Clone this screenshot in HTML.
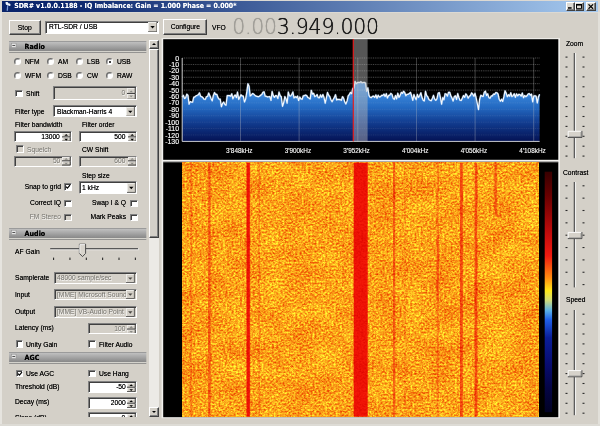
<!DOCTYPE html><html><head><meta charset="utf-8"><title>SDR#</title><style>
*{box-sizing:border-box;margin:0;padding:0}
html,body{width:600px;height:426px;overflow:hidden;background:#d4d0c8}
body{position:relative;opacity:.9999;font-family:"Liberation Sans",sans-serif;font-size:7.5px;color:#000;line-height:1;text-shadow:0 0 .6px rgba(0,0,0,.75)}
.a{position:absolute}
.t{position:absolute;white-space:nowrap;line-height:8px;height:8px;transform:scaleX(.895);transform-origin:0 50%}
.t.r{transform-origin:100% 50%}
.btn>span{display:inline-block;transform:scaleX(.9)}
.g{color:#74726c;text-shadow:.6px .6px 0 rgba(255,255,255,.85)}
.r{text-align:right}
.btn{position:absolute;background:#d4d0c8;border:1px solid;border-color:#fff #404040 #404040 #fff;box-shadow:inset -1px -1px 0 #808080;text-align:center}
.sunk{position:absolute;background:#fff;border:1px solid;border-color:#808080 #fff #fff #808080;box-shadow:inset 1px 1px 0 #404040}
.sunk.dis{background:#d4d0c8}
.cb{position:absolute;width:7.5px;height:7.5px;background:#fff;border:1px solid;border-color:#808080 #fff #fff #808080;box-shadow:inset 1px 1px 0 #404040}
.cb.dis{background:#d4d0c8}
.rb{position:absolute;width:7px;height:7px;border-radius:50%;background:#fff;border:1px solid;border-color:#6a6a6a #fff #fff #6a6a6a;box-shadow:inset .5px .5px 0 #707070}
.hdr{position:absolute;left:9.3px;width:137.4px;height:12.2px}
.hdr svg{position:absolute;left:0;top:0}
.hdr b{position:absolute;left:15.3px;top:1.2px;font-family:"DejaVu Sans Condensed","Liberation Sans",sans-serif;font-size:7.1px;line-height:9px}
.dd{position:absolute;background:#d4d0c8;border:1px solid;border-color:#fff #404040 #404040 #fff;box-shadow:inset -.5px -.5px 0 #808080}
.dd:after{content:"";position:absolute;left:50%;top:50%;margin:-1px 0 0 -2px;border:2px solid transparent;border-top:2.2px solid #000;border-bottom:0}
.dd.dis:after{border-top-color:#808080}
.sp{position:absolute}
</style></head><body>
<div class="a" style="left:0;top:0;width:600px;height:13px;background:#dcd9d3"></div>
<div class="a" style="left:2px;top:1px;width:596px;height:10.8px;background:linear-gradient(90deg,#0a246a 0%,#0c276e 12%,#a6caf0 100%)"></div>
<svg class="a" style="left:4px;top:1px" width="9" height="11" viewBox="0 0 9 11"><path d="M3.2 3.5L2.6 9.8L4 9.8L4.2 4.5Z" fill="#7e9cd8"/><path d="M1.5 1.2C3 .6 4.2 1 4.4 2.4C5.6 2.2 6.8 3 6.6 4.6C5.6 5.4 4.4 5 4 4C2.6 4.4 1.4 3.4 1.5 1.2Z" fill="#eef3fb"/></svg>
<div class="t" style="left:14.2px;top:2.1px;font-family:'DejaVu Sans Condensed','Liberation Sans',sans-serif;font-size:6.94px;font-weight:bold;color:#fff;line-height:9px;height:9px;transform:none;text-shadow:0 0 .6px rgba(255,255,255,.6)">SDR# v1.0.0.1188 - IQ Imbalance: Gain = 1.000 Phase = 0.000*</div>
<div class="btn" style="left:565.5px;top:1.8px;width:9px;height:8.8px;background:#dcd9d2">
<svg class="a" style="left:1.2px;top:4.4px" width="4" height="2" viewBox="0 0 4 2"><rect y=".2" width="3.6" height="1.5" fill="#000"/></svg>
</div>
<div class="btn" style="left:574.5px;top:1.8px;width:9px;height:8.8px;background:#dcd9d2">
<svg class="a" style="left:.8px;top:1.2px" width="6" height="5.6" viewBox="0 0 6 5.6"><path d="M.5 .8V4.7H5.5V.8Z" fill="none" stroke="#000" stroke-width="1"/><path d="M0 .7H6" stroke="#000" stroke-width="1.4"/></svg>
</div>
<div class="btn" style="left:586px;top:1.8px;width:10px;height:8.8px;background:#dcd9d2">
<svg class="a" style="left:1.4px;top:.9px" width="5.6" height="5.2" viewBox="0 0 5.6 5.2"><path d="M.5 .4L5.1 4.8M5.1 .4L.5 4.8" stroke="#000" stroke-width="1.25"/></svg>
</div>
<div class="a" style="left:0;top:12px;width:1.5px;height:414px;background:#e6e4df"></div>
<div class="a" style="left:598px;top:12px;width:2px;height:414px;background:#e2e0da"></div>
<div class="a" style="left:0;top:424px;width:600px;height:2px;background:#dddbd5"></div>
<div class="btn" style="left:9px;top:19.5px;width:31.5px;height:15px;line-height:13px"><span>Stop</span></div>
<div class="sunk" style="left:45px;top:20.5px;width:113.6px;height:13px"><span class="t" style="left:3px;top:1.5px">RTL-SDR / USB</span><svg class="sp" style="right:.8px;top:.8px" width="9.3" height="10.20" viewBox="0 0 9.3 10.20"><rect width="9.3" height="10.20" fill="#d4d0c8"/><path d="M.35 9.80V.35H8.9" stroke="#fff" stroke-width=".7" fill="none"/><path d="M0 9.80H8.9V0" stroke="#404040" stroke-width=".8" fill="none"/><path d="M2.35 4.00H6.75L4.55 6.40Z" fill="#000"/></svg></div>
<div class="btn" style="left:163.3px;top:19.3px;width:43.4px;height:15.6px;line-height:13.6px"><span>Configure</span></div>
<div class="t" style="left:211.7px;top:23.9px">VFO</div>
<div class="t" style="left:232.2px;top:15.1px;font-family:'DejaVu Sans Light','DejaVu Sans','Liberation Sans',sans-serif;font-weight:200;font-size:20.5px;letter-spacing:-.26px;line-height:24px;height:24px;color:#1c1c1c;transform:none;text-shadow:0 0 .5px rgba(0,0,0,.9),0 0 1px rgba(0,0,0,.35)"><span style="color:#a09e98;text-shadow:0 0 .5px #a09e98,0 0 1px rgba(150,148,142,.5)">0.00</span>3.949.000</div>
<div class="a" style="left:0;top:38px;width:149px;height:378.5px;overflow:hidden"><div class="a" style="left:0;top:-38px;width:149px;height:500px">
<div class="hdr" style="top:41.2px"><svg width="137.4" height="12.2" viewBox="0 0 137.4 12.2"><defs><linearGradient id="hg41" x1="0" y1="0" x2="0" y2="1"><stop offset="0" stop-color="#c6c6c6"/><stop offset=".5" stop-color="#a6a6a6"/><stop offset="1" stop-color="#868686"/></linearGradient></defs><rect width="137.4" height="10.3" fill="url(#hg41)"/><rect width="137.4" height=".7" fill="#8a8a8a"/><rect y="10.3" width="137.4" height="1" fill="#dedcd6"/><rect y="11.3" width="137.4" height=".9" fill="#7a7a7a"/><rect x="2.4" y="2.2" width="4.6" height="4.4" fill="#e6e6e6" stroke="#8c8c8c" stroke-width=".5"/><rect x="3.3" y="4" width="2.8" height=".9" fill="#444"/></svg><b>Radio</b></div>
<div class="rb" style="left:13.8px;top:58.2px"></div>
<div class="t " style="left:24.6px;top:57.7px">NFM</div>
<div class="rb" style="left:13.8px;top:72.3px"></div>
<div class="t " style="left:24.6px;top:71.8px">WFM</div>
<div class="rb" style="left:47.0px;top:58.2px"></div>
<div class="t " style="left:57.8px;top:57.7px">AM</div>
<div class="rb" style="left:47.0px;top:72.3px"></div>
<div class="t " style="left:57.8px;top:71.8px">DSB</div>
<div class="rb" style="left:76.0px;top:58.2px"></div>
<div class="t " style="left:86.8px;top:57.7px">LSB</div>
<div class="rb" style="left:76.0px;top:72.3px"></div>
<div class="t " style="left:86.8px;top:71.8px">CW</div>
<div class="rb" style="left:106.0px;top:58.2px"><div class="a" style="left:1.5px;top:1.5px;width:2.4px;height:2.4px;border-radius:50%;background:#000"></div></div>
<div class="t " style="left:116.8px;top:57.7px">USB</div>
<div class="rb" style="left:106.0px;top:72.3px"></div>
<div class="t " style="left:116.8px;top:71.8px">RAW</div>
<div class="cb" style="left:15px;top:89.8px"></div>
<div class="t " style="left:26px;top:89.7px">Shift</div>
<div class="sunk dis" style="left:53.3px;top:86px;width:83.4px;height:14px"><span class="t r g" style="right:10.4px;top:2.3px">0</span><svg class="sp" style="right:.2px;top:.6px" width="8.6" height="11.60" viewBox="0 0 8.6 11.60"><rect width="8.6" height="11.60" fill="#d4d0c8"/><path d="M.3 5.40V.3H8.3M.3 11.20V6.10H8.3" stroke="#fff" stroke-width=".7" fill="none"/><path d="M0 5.45H8.25V0M0 11.25H8.25V5.80" stroke="#303030" stroke-width=".95" fill="none"/><path d="M2.4 4.30L4.2 2.50L6 4.30Z M2.4 7.40L4.2 9.20L6 7.40Z" fill="#8a8a86"/></svg></div>
<div class="t " style="left:14.7px;top:107.6px">Filter type</div>
<div class="sunk" style="left:53.3px;top:105px;width:83.4px;height:12.2px"><span class="t" style="left:2.5px;top:1.4999999999999996px">Blackman-Harris 4</span><svg class="sp" style="right:.8px;top:.8px" width="8.8" height="9.60" viewBox="0 0 8.8 9.60"><rect width="8.8" height="9.60" fill="#d4d0c8"/><path d="M.35 9.20V.35H8.4" stroke="#fff" stroke-width=".7" fill="none"/><path d="M0 9.20H8.4V0" stroke="#404040" stroke-width=".8" fill="none"/><path d="M2.10 3.70H6.50L4.30 6.10Z" fill="#000"/></svg></div>
<div class="t " style="left:14.7px;top:121px">Filter bandwidth</div>
<div class="t " style="left:81.6px;top:121px">Filter order</div>
<div class="sunk" style="left:13.5px;top:131.2px;width:58.2px;height:10.9px"><span class="t r" style="right:10.4px;top:0.75px">13000</span><svg class="sp" style="right:.2px;top:.6px" width="8.6" height="8.50" viewBox="0 0 8.6 8.50"><rect width="8.6" height="8.50" fill="#d4d0c8"/><path d="M.3 3.85V.3H8.3M.3 8.10V4.55H8.3" stroke="#fff" stroke-width=".7" fill="none"/><path d="M0 3.90H8.25V0M0 8.15H8.25V4.25" stroke="#303030" stroke-width=".95" fill="none"/><path d="M2.4 2.75L4.2 0.95L6 2.75Z M2.4 5.85L4.2 7.65L6 5.85Z" fill="#000"/></svg></div>
<div class="sunk" style="left:79.2px;top:131.2px;width:58.2px;height:10.9px"><span class="t r" style="right:10.4px;top:0.75px">500</span><svg class="sp" style="right:.2px;top:.6px" width="8.6" height="8.50" viewBox="0 0 8.6 8.50"><rect width="8.6" height="8.50" fill="#d4d0c8"/><path d="M.3 3.85V.3H8.3M.3 8.10V4.55H8.3" stroke="#fff" stroke-width=".7" fill="none"/><path d="M0 3.90H8.25V0M0 8.15H8.25V4.25" stroke="#303030" stroke-width=".95" fill="none"/><path d="M2.4 2.75L4.2 0.95L6 2.75Z M2.4 5.85L4.2 7.65L6 5.85Z" fill="#000"/></svg></div>
<div class="cb dis" style="left:16.3px;top:145.10000000000002px"></div>
<div class="t g" style="left:27px;top:145.5px">Squelch</div>
<div class="t " style="left:81.6px;top:146.2px">CW Shift</div>
<div class="sunk dis" style="left:13.5px;top:155.8px;width:58.2px;height:10.8px"><span class="t r g" style="right:10.4px;top:0.7000000000000002px">50</span><svg class="sp" style="right:.2px;top:.6px" width="8.6" height="8.40" viewBox="0 0 8.6 8.40"><rect width="8.6" height="8.40" fill="#d4d0c8"/><path d="M.3 3.80V.3H8.3M.3 8.00V4.50H8.3" stroke="#fff" stroke-width=".7" fill="none"/><path d="M0 3.85H8.25V0M0 8.05H8.25V4.20" stroke="#303030" stroke-width=".95" fill="none"/><path d="M2.4 2.70L4.2 0.90L6 2.70Z M2.4 5.80L4.2 7.60L6 5.80Z" fill="#8a8a86"/></svg></div>
<div class="sunk dis" style="left:79.2px;top:155.8px;width:58.2px;height:10.8px"><span class="t r g" style="right:10.4px;top:0.7000000000000002px">600</span><svg class="sp" style="right:.2px;top:.6px" width="8.6" height="8.40" viewBox="0 0 8.6 8.40"><rect width="8.6" height="8.40" fill="#d4d0c8"/><path d="M.3 3.80V.3H8.3M.3 8.00V4.50H8.3" stroke="#fff" stroke-width=".7" fill="none"/><path d="M0 3.85H8.25V0M0 8.05H8.25V4.20" stroke="#303030" stroke-width=".95" fill="none"/><path d="M2.4 2.70L4.2 0.90L6 2.70Z M2.4 5.80L4.2 7.60L6 5.80Z" fill="#8a8a86"/></svg></div>
<div class="t " style="left:81.6px;top:172px">Step size</div>
<div class="t r " style="left:-19.5px;width:80px;top:183.3px">Snap to grid</div>
<div class="cb" style="left:64.3px;top:183.3px"><svg class="a" style="left:0;top:0" width="6" height="6" viewBox="0 0 6 6"><path d="M1 2.6L2.4 4.2L5 1.2" stroke="#000" stroke-width="1.2" fill="none"/></svg></div>
<div class="sunk" style="left:78.8px;top:181.2px;width:58.6px;height:12.4px"><span class="t" style="left:2.5px;top:1.6px">1 kHz</span><svg class="sp" style="right:.8px;top:.8px" width="8.8" height="9.80" viewBox="0 0 8.8 9.80"><rect width="8.8" height="9.80" fill="#d4d0c8"/><path d="M.35 9.40V.35H8.4" stroke="#fff" stroke-width=".7" fill="none"/><path d="M0 9.40H8.4V0" stroke="#404040" stroke-width=".8" fill="none"/><path d="M2.10 3.80H6.50L4.30 6.20Z" fill="#000"/></svg></div>
<div class="t r " style="left:-19.5px;width:80px;top:199.4px">Correct IQ</div>
<div class="cb" style="left:64.3px;top:199.5px"></div>
<div class="t r " style="left:46px;width:80px;top:199.4px">Swap I &amp; Q</div>
<div class="cb" style="left:130px;top:199.5px"></div>
<div class="t r g" style="left:-19.5px;width:80px;top:213.4px">FM Stereo</div>
<div class="cb dis" style="left:64.3px;top:213.5px"></div>
<div class="t r " style="left:46px;width:80px;top:213.4px">Mark Peaks</div>
<div class="cb" style="left:130px;top:213.5px"></div>
<div class="hdr" style="top:228px"><svg width="137.4" height="12.2" viewBox="0 0 137.4 12.2"><defs><linearGradient id="hg228" x1="0" y1="0" x2="0" y2="1"><stop offset="0" stop-color="#c6c6c6"/><stop offset=".5" stop-color="#a6a6a6"/><stop offset="1" stop-color="#868686"/></linearGradient></defs><rect width="137.4" height="10.3" fill="url(#hg228)"/><rect width="137.4" height=".7" fill="#8a8a8a"/><rect y="10.3" width="137.4" height="1" fill="#dedcd6"/><rect y="11.3" width="137.4" height=".9" fill="#7a7a7a"/><rect x="2.4" y="2.2" width="4.6" height="4.4" fill="#e6e6e6" stroke="#8c8c8c" stroke-width=".5"/><rect x="3.3" y="4" width="2.8" height=".9" fill="#444"/></svg><b>Audio</b></div>
<div class="t " style="left:14.7px;top:248px">AF Gain</div>
<svg class="a" style="left:48px;top:242px" width="94" height="22" viewBox="48 242 94 22">
<path d="M50.2 248.7H138.3" stroke="#585858" stroke-width="1.4"/><path d="M50.2 249.8H138.6V248" stroke="#f4f4f4" stroke-width=".7" fill="none"/>
<path d="M79.4 244.2H85.6V253.4L82.5 256.6L79.4 253.4Z" fill="#d8d4cc" stroke="#404040" stroke-width=".9"/><path d="M79.8 253.2V244.6H85" stroke="#fff" stroke-width=".9" fill="none"/>
<rect x="53.10" y="257.6" width="1" height="2.4" fill="#1a1a1a"/>
<rect x="69.45" y="257.6" width="1" height="2.4" fill="#1a1a1a"/>
<rect x="85.80" y="257.6" width="1" height="2.4" fill="#1a1a1a"/>
<rect x="102.15" y="257.6" width="1" height="2.4" fill="#1a1a1a"/>
<rect x="118.50" y="257.6" width="1" height="2.4" fill="#1a1a1a"/>
<rect x="134.85" y="257.6" width="1" height="2.4" fill="#1a1a1a"/>
</svg>
<div class="t " style="left:14.7px;top:274px">Samplerate</div>
<div class="sunk dis" style="left:53.5px;top:272px;width:83.2px;height:11.6px"><span class="t g" style="left:2.5px;top:1.1999999999999997px">48000 sample/sec</span><svg class="sp" style="right:.8px;top:.8px" width="8.8" height="9.00" viewBox="0 0 8.8 9.00"><rect width="8.8" height="9.00" fill="#d4d0c8"/><path d="M.35 8.60V.35H8.4" stroke="#fff" stroke-width=".7" fill="none"/><path d="M0 8.60H8.4V0" stroke="#404040" stroke-width=".8" fill="none"/><path d="M2.10 3.40H6.50L4.30 5.80Z" fill="#4a4844"/></svg></div>
<div class="t " style="left:14.7px;top:290.5px">Input</div>
<div class="sunk dis" style="left:53.5px;top:288.7px;width:83.2px;height:11.6px"><span class="t g" style="left:2.5px;top:1.1999999999999997px">[MME] Microsoft Sound</span><svg class="sp" style="right:.8px;top:.8px" width="8.8" height="9.00" viewBox="0 0 8.8 9.00"><rect width="8.8" height="9.00" fill="#d4d0c8"/><path d="M.35 8.60V.35H8.4" stroke="#fff" stroke-width=".7" fill="none"/><path d="M0 8.60H8.4V0" stroke="#404040" stroke-width=".8" fill="none"/><path d="M2.10 3.40H6.50L4.30 5.80Z" fill="#4a4844"/></svg></div>
<div class="t " style="left:14.7px;top:307.6px">Output</div>
<div class="sunk dis" style="left:53.5px;top:306.2px;width:83.2px;height:11.5px"><span class="t g" style="left:2.5px;top:1.15px">[MME] VB-Audio Point</span><svg class="sp" style="right:.8px;top:.8px" width="8.8" height="8.90" viewBox="0 0 8.8 8.90"><rect width="8.8" height="8.90" fill="#d4d0c8"/><path d="M.35 8.50V.35H8.4" stroke="#fff" stroke-width=".7" fill="none"/><path d="M0 8.50H8.4V0" stroke="#404040" stroke-width=".8" fill="none"/><path d="M2.10 3.35H6.50L4.30 5.75Z" fill="#4a4844"/></svg></div>
<div class="t " style="left:15.3px;top:324.2px">Latency (ms)</div>
<div class="sunk dis" style="left:87.8px;top:323px;width:48.9px;height:11.2px"><span class="t r g" style="right:10.4px;top:0.8999999999999995px">100</span><svg class="sp" style="right:.2px;top:.6px" width="8.6" height="8.80" viewBox="0 0 8.6 8.80"><rect width="8.6" height="8.80" fill="#d4d0c8"/><path d="M.3 4.00V.3H8.3M.3 8.40V4.70H8.3" stroke="#fff" stroke-width=".7" fill="none"/><path d="M0 4.05H8.25V0M0 8.45H8.25V4.40" stroke="#303030" stroke-width=".95" fill="none"/><path d="M2.4 2.90L4.2 1.10L6 2.90Z M2.4 6.00L4.2 7.80L6 6.00Z" fill="#8a8a86"/></svg></div>
<div class="cb" style="left:15.6px;top:340.1px"></div>
<div class="t " style="left:26.3px;top:340.7px">Unity Gain</div>
<div class="cb" style="left:88.4px;top:340.1px"></div>
<div class="t " style="left:99px;top:340.7px">Filter Audio</div>
<div class="hdr" style="top:351.9px"><svg width="137.4" height="12.2" viewBox="0 0 137.4 12.2"><defs><linearGradient id="hg351" x1="0" y1="0" x2="0" y2="1"><stop offset="0" stop-color="#c6c6c6"/><stop offset=".5" stop-color="#a6a6a6"/><stop offset="1" stop-color="#868686"/></linearGradient></defs><rect width="137.4" height="10.3" fill="url(#hg351)"/><rect width="137.4" height=".7" fill="#8a8a8a"/><rect y="10.3" width="137.4" height="1" fill="#dedcd6"/><rect y="11.3" width="137.4" height=".9" fill="#7a7a7a"/><rect x="2.4" y="2.2" width="4.6" height="4.4" fill="#e6e6e6" stroke="#8c8c8c" stroke-width=".5"/><rect x="3.3" y="4" width="2.8" height=".9" fill="#444"/></svg><b>AGC</b></div>
<div class="cb" style="left:15.6px;top:369.5px"><svg class="a" style="left:0;top:0" width="6" height="6" viewBox="0 0 6 6"><path d="M1 2.6L2.4 4.2L5 1.2" stroke="#000" stroke-width="1.2" fill="none"/></svg></div>
<div class="t " style="left:26.3px;top:369.5px">Use AGC</div>
<div class="cb" style="left:88.4px;top:369.5px"></div>
<div class="t " style="left:99px;top:369.5px">Use Hang</div>
<div class="t " style="left:14.7px;top:382.7px">Threshold (dB)</div>
<div class="sunk" style="left:87.8px;top:381px;width:49px;height:11.5px"><span class="t r" style="right:10.4px;top:1.0499999999999998px">-50</span><svg class="sp" style="right:.2px;top:.6px" width="8.6" height="9.10" viewBox="0 0 8.6 9.10"><rect width="8.6" height="9.10" fill="#d4d0c8"/><path d="M.3 4.15V.3H8.3M.3 8.70V4.85H8.3" stroke="#fff" stroke-width=".7" fill="none"/><path d="M0 4.20H8.25V0M0 8.75H8.25V4.55" stroke="#303030" stroke-width=".95" fill="none"/><path d="M2.4 3.05L4.2 1.25L6 3.05Z M2.4 6.15L4.2 7.95L6 6.15Z" fill="#000"/></svg></div>
<div class="t " style="left:14.7px;top:398.4px">Decay (ms)</div>
<div class="sunk" style="left:87.8px;top:397.2px;width:49px;height:11.5px"><span class="t r" style="right:10.4px;top:1.0499999999999998px">2000</span><svg class="sp" style="right:.2px;top:.6px" width="8.6" height="9.10" viewBox="0 0 8.6 9.10"><rect width="8.6" height="9.10" fill="#d4d0c8"/><path d="M.3 4.15V.3H8.3M.3 8.70V4.85H8.3" stroke="#fff" stroke-width=".7" fill="none"/><path d="M0 4.20H8.25V0M0 8.75H8.25V4.55" stroke="#303030" stroke-width=".95" fill="none"/><path d="M2.4 3.05L4.2 1.25L6 3.05Z M2.4 6.15L4.2 7.95L6 6.15Z" fill="#000"/></svg></div>
<div class="t " style="left:14.7px;top:414.2px">Slope (dB)</div>
<div class="sunk" style="left:87.8px;top:412.4px;width:49px;height:11.5px"><span class="t r" style="right:10.4px;top:1.0499999999999998px">0</span><svg class="sp" style="right:.2px;top:.6px" width="8.6" height="9.10" viewBox="0 0 8.6 9.10"><rect width="8.6" height="9.10" fill="#d4d0c8"/><path d="M.3 4.15V.3H8.3M.3 8.70V4.85H8.3" stroke="#fff" stroke-width=".7" fill="none"/><path d="M0 4.20H8.25V0M0 8.75H8.25V4.55" stroke="#303030" stroke-width=".95" fill="none"/><path d="M2.4 3.05L4.2 1.25L6 3.05Z M2.4 6.15L4.2 7.95L6 6.15Z" fill="#000"/></svg></div>
</div></div>
<div class="a" style="left:149px;top:40px;width:9.5px;height:376.5px;background:#eceae6"></div>
<div class="btn" style="left:149px;top:40px;width:9.5px;height:9.3px"><div class="a" style="left:1.8px;top:2.2px;border:2px solid transparent;border-bottom:2.3px solid #000;border-top:0"></div></div>
<div class="btn" style="left:149px;top:49.3px;width:9.5px;height:189.2px"></div>
<div class="btn" style="left:149px;top:407px;width:9.5px;height:9.5px"><div class="a" style="left:1.8px;top:3px;border:2px solid transparent;border-top:2.3px solid #000;border-bottom:0"></div></div>
<svg class="a" style="left:160px;top:37px" width="402" height="383" viewBox="160 37 402 383"><rect x="161.6" y="38.2" width="398.4" height="380" fill="#f2f1ee"/><rect x="163.2" y="161.5" width="395.1" height="1.2" fill="#6a6a6a"/></svg>
<svg class="a" style="left:163px;top:39px;text-shadow:none" width="396" height="121" viewBox="163 39 396 121">
<defs><linearGradient id="sg" gradientUnits="userSpaceOnUse" x1="0" y1="92" x2="0" y2="141.4"><stop offset="0" stop-color="#3c8ade"/><stop offset=".3" stop-color="#246ac2"/><stop offset=".6" stop-color="#123e92"/><stop offset="1" stop-color="#041254"/></linearGradient></defs>
<rect x="163.2" y="39.2" width="395.1" height="120.6" fill="#000"/>
<polygon points="182.2,141.4 182.2,97.1 183.4,95.4 184.5,98.5 185.7,97.7 186.8,94.2 188.0,95.5 189.1,104.1 190.3,101.6 191.4,102.1 192.6,102.2 193.7,97.4 194.9,96.9 196.0,95.8 197.2,95.3 198.3,94.7 199.5,92.9 200.6,96.3 201.8,96.7 203.0,97.7 204.1,99.3 205.3,99.4 206.4,96.7 207.6,96.4 208.7,93.1 209.9,95.8 211.0,98.4 212.2,100.8 213.3,95.7 214.5,92.5 215.6,94.4 216.8,94.3 217.9,97.4 219.1,99.2 220.2,99.1 221.4,106.7 222.6,103.3 223.7,102.0 224.9,104.5 226.0,105.2 227.2,95.6 228.3,95.6 229.5,95.6 230.6,96.2 231.8,93.8 232.9,98.8 234.1,96.2 235.2,95.0 236.4,97.6 237.5,92.0 238.7,99.4 239.8,97.2 241.0,94.8 242.2,96.0 243.3,96.1 244.5,102.0 245.6,99.1 246.8,92.2 247.9,83.8 249.1,86.3 250.2,95.9 251.4,95.0 252.5,93.5 253.7,94.1 254.8,95.2 256.0,96.1 257.1,96.4 258.3,96.8 259.4,96.2 260.6,95.2 261.8,94.5 262.9,92.3 264.1,91.8 265.2,96.2 266.4,96.3 267.5,96.9 268.7,96.8 269.8,96.5 271.0,100.4 272.1,91.5 273.3,95.7 274.4,97.3 275.6,95.6 276.7,95.8 277.9,98.5 279.0,92.1 280.2,95.7 281.3,96.7 282.5,106.3 283.7,102.8 284.8,96.6 286.0,98.7 287.1,103.2 288.3,92.1 289.4,95.7 290.6,96.0 291.7,94.7 292.9,92.0 294.0,98.0 295.2,96.6 296.3,97.6 297.5,96.0 298.6,100.5 299.8,97.1 300.9,98.9 302.1,99.3 303.3,95.7 304.4,95.6 305.6,95.1 306.7,95.6 307.9,97.6 309.0,98.1 310.2,99.0 311.3,90.4 312.5,94.1 313.6,93.3 314.8,96.6 315.9,96.1 317.1,94.5 318.2,97.6 319.4,97.8 320.5,94.9 321.7,97.3 322.9,94.5 324.0,97.4 325.2,103.2 326.3,98.1 327.5,92.4 328.6,95.1 329.8,96.6 330.9,99.8 332.1,101.7 333.2,99.6 334.4,97.4 335.5,94.7 336.7,100.0 337.8,99.2 339.0,99.6 340.1,99.4 341.3,100.4 342.5,96.7 343.6,98.2 344.8,102.0 345.9,103.9 347.1,100.9 348.2,95.8 349.4,94.4 350.5,92.4 351.7,93.6 352.8,88.4 354.0,88.0 355.1,81.4 356.3,83.7 357.4,82.6 358.6,82.4 359.7,82.5 360.9,81.7 362.1,82.8 363.2,82.5 364.4,82.4 365.5,83.0 366.7,91.3 367.8,87.8 369.0,95.4 370.1,97.2 371.3,97.6 372.4,96.4 373.6,96.1 374.7,97.4 375.9,94.9 377.0,98.2 378.2,95.2 379.3,97.0 380.5,96.6 381.7,95.3 382.8,95.5 384.0,94.1 385.1,96.5 386.3,93.6 387.4,98.0 388.6,95.4 389.7,95.1 390.9,93.4 392.0,94.4 393.2,98.3 394.3,99.4 395.5,95.5 396.6,98.9 397.8,93.2 398.9,97.4 400.1,95.4 401.3,92.4 402.4,93.4 403.6,91.3 404.7,92.5 405.9,95.7 407.0,94.4 408.2,94.3 409.3,93.5 410.5,92.4 411.6,95.8 412.8,100.3 413.9,94.5 415.1,97.6 416.2,99.6 417.4,94.4 418.5,97.4 419.7,95.5 420.9,92.8 422.0,97.6 423.2,100.2 424.3,101.0 425.5,91.3 426.6,95.4 427.8,96.8 428.9,99.5 430.1,100.4 431.2,100.7 432.4,98.2 433.5,95.4 434.7,99.2 435.8,100.3 437.0,98.7 438.1,93.3 439.3,92.5 440.5,98.0 441.6,104.2 442.8,97.5 443.9,99.8 445.1,93.7 446.2,94.0 447.4,96.1 448.5,92.3 449.7,92.3 450.8,95.7 452.0,98.0 453.1,101.0 454.3,96.6 455.4,95.8 456.6,99.5 457.7,93.6 458.9,97.5 460.0,100.3 461.2,100.5 462.4,98.0 463.5,95.6 464.7,97.3 465.8,93.9 467.0,95.4 468.1,98.1 469.3,96.3 470.4,95.6 471.6,92.9 472.7,94.1 473.9,96.2 475.0,93.4 476.2,98.2 477.3,103.5 478.5,109.6 479.6,99.5 480.8,95.3 482.0,96.1 483.1,96.5 484.3,92.2 485.4,91.2 486.6,95.5 487.7,93.8 488.9,97.7 490.0,98.2 491.2,95.9 492.3,95.9 493.5,94.0 494.6,94.4 495.8,92.5 496.9,92.7 498.1,94.2 499.2,99.2 500.4,101.2 501.6,99.2 502.7,101.4 503.9,96.7 505.0,90.9 506.2,93.1 507.3,96.7 508.5,94.7 509.6,96.2 510.8,92.7 511.9,96.6 513.1,95.6 514.2,93.7 515.4,97.3 516.5,93.9 517.7,95.8 518.8,94.3 520.0,94.6 521.2,96.1 522.3,93.0 523.5,97.7 524.6,95.5 525.8,96.7 526.9,95.8 528.1,94.1 529.2,93.6 530.4,95.2 531.5,94.1 532.7,101.8 533.8,96.0 535.0,95.7 536.1,96.2 537.3,102.9 538.4,96.9 539.6,94.3 539.6,141.4" fill="url(#sg)"/>
<line x1="182.2" x2="539.6" y1="58.00" y2="58.00" stroke="#e0e0e0" stroke-width=".7" stroke-dasharray="1 .8" opacity="0.48"/>
<line x1="182.2" x2="539.6" y1="64.42" y2="64.42" stroke="#e0e0e0" stroke-width=".7" stroke-dasharray="1 .8" opacity="0.48"/>
<line x1="182.2" x2="539.6" y1="70.83" y2="70.83" stroke="#e0e0e0" stroke-width=".7" stroke-dasharray="1 .8" opacity="0.48"/>
<line x1="182.2" x2="539.6" y1="77.25" y2="77.25" stroke="#e0e0e0" stroke-width=".7" stroke-dasharray="1 .8" opacity="0.48"/>
<line x1="182.2" x2="539.6" y1="83.66" y2="83.66" stroke="#e0e0e0" stroke-width=".7" stroke-dasharray="1 .8" opacity="0.48"/>
<line x1="182.2" x2="539.6" y1="90.08" y2="90.08" stroke="#e0e0e0" stroke-width=".7" stroke-dasharray="1 .8" opacity="0.48"/>
<line x1="182.2" x2="539.6" y1="96.49" y2="96.49" stroke="#e0e0e0" stroke-width=".7" stroke-dasharray="1 .8" opacity="0.14"/>
<line x1="182.2" x2="539.6" y1="102.91" y2="102.91" stroke="#e0e0e0" stroke-width=".7" stroke-dasharray="1 .8" opacity="0.14"/>
<line x1="182.2" x2="539.6" y1="109.32" y2="109.32" stroke="#e0e0e0" stroke-width=".7" stroke-dasharray="1 .8" opacity="0.14"/>
<line x1="182.2" x2="539.6" y1="115.74" y2="115.74" stroke="#e0e0e0" stroke-width=".7" stroke-dasharray="1 .8" opacity="0.14"/>
<line x1="182.2" x2="539.6" y1="122.15" y2="122.15" stroke="#e0e0e0" stroke-width=".7" stroke-dasharray="1 .8" opacity="0.14"/>
<line x1="182.2" x2="539.6" y1="128.57" y2="128.57" stroke="#e0e0e0" stroke-width=".7" stroke-dasharray="1 .8" opacity="0.14"/>
<line x1="182.2" x2="539.6" y1="134.98" y2="134.98" stroke="#e0e0e0" stroke-width=".7" stroke-dasharray="1 .8" opacity="0.14"/>
<line x1="182.2" x2="539.6" y1="141.40" y2="141.40" stroke="#e0e0e0" stroke-width=".7" stroke-dasharray="1 .8" opacity="0.14"/>
<line x1="240.5" x2="240.5" y1="58.0" y2="141.4" stroke="#c8c8c8" stroke-width=".8" opacity=".4"/>
<line x1="299.1" x2="299.1" y1="58.0" y2="141.4" stroke="#c8c8c8" stroke-width=".8" opacity=".4"/>
<line x1="357.8" x2="357.8" y1="58.0" y2="141.4" stroke="#c8c8c8" stroke-width=".8" opacity=".4"/>
<line x1="416.4" x2="416.4" y1="58.0" y2="141.4" stroke="#c8c8c8" stroke-width=".8" opacity=".4"/>
<line x1="475.1" x2="475.1" y1="58.0" y2="141.4" stroke="#c8c8c8" stroke-width=".8" opacity=".4"/>
<line x1="533.7" x2="533.7" y1="58.0" y2="141.4" stroke="#c8c8c8" stroke-width=".8" opacity=".4"/>
<polyline points="182.2,97.1 183.4,95.4 184.5,98.5 185.7,97.7 186.8,94.2 188.0,95.5 189.1,104.1 190.3,101.6 191.4,102.1 192.6,102.2 193.7,97.4 194.9,96.9 196.0,95.8 197.2,95.3 198.3,94.7 199.5,92.9 200.6,96.3 201.8,96.7 203.0,97.7 204.1,99.3 205.3,99.4 206.4,96.7 207.6,96.4 208.7,93.1 209.9,95.8 211.0,98.4 212.2,100.8 213.3,95.7 214.5,92.5 215.6,94.4 216.8,94.3 217.9,97.4 219.1,99.2 220.2,99.1 221.4,106.7 222.6,103.3 223.7,102.0 224.9,104.5 226.0,105.2 227.2,95.6 228.3,95.6 229.5,95.6 230.6,96.2 231.8,93.8 232.9,98.8 234.1,96.2 235.2,95.0 236.4,97.6 237.5,92.0 238.7,99.4 239.8,97.2 241.0,94.8 242.2,96.0 243.3,96.1 244.5,102.0 245.6,99.1 246.8,92.2 247.9,83.8 249.1,86.3 250.2,95.9 251.4,95.0 252.5,93.5 253.7,94.1 254.8,95.2 256.0,96.1 257.1,96.4 258.3,96.8 259.4,96.2 260.6,95.2 261.8,94.5 262.9,92.3 264.1,91.8 265.2,96.2 266.4,96.3 267.5,96.9 268.7,96.8 269.8,96.5 271.0,100.4 272.1,91.5 273.3,95.7 274.4,97.3 275.6,95.6 276.7,95.8 277.9,98.5 279.0,92.1 280.2,95.7 281.3,96.7 282.5,106.3 283.7,102.8 284.8,96.6 286.0,98.7 287.1,103.2 288.3,92.1 289.4,95.7 290.6,96.0 291.7,94.7 292.9,92.0 294.0,98.0 295.2,96.6 296.3,97.6 297.5,96.0 298.6,100.5 299.8,97.1 300.9,98.9 302.1,99.3 303.3,95.7 304.4,95.6 305.6,95.1 306.7,95.6 307.9,97.6 309.0,98.1 310.2,99.0 311.3,90.4 312.5,94.1 313.6,93.3 314.8,96.6 315.9,96.1 317.1,94.5 318.2,97.6 319.4,97.8 320.5,94.9 321.7,97.3 322.9,94.5 324.0,97.4 325.2,103.2 326.3,98.1 327.5,92.4 328.6,95.1 329.8,96.6 330.9,99.8 332.1,101.7 333.2,99.6 334.4,97.4 335.5,94.7 336.7,100.0 337.8,99.2 339.0,99.6 340.1,99.4 341.3,100.4 342.5,96.7 343.6,98.2 344.8,102.0 345.9,103.9 347.1,100.9 348.2,95.8 349.4,94.4 350.5,92.4 351.7,93.6 352.8,88.4 354.0,88.0 355.1,81.4 356.3,83.7 357.4,82.6 358.6,82.4 359.7,82.5 360.9,81.7 362.1,82.8 363.2,82.5 364.4,82.4 365.5,83.0 366.7,91.3 367.8,87.8 369.0,95.4 370.1,97.2 371.3,97.6 372.4,96.4 373.6,96.1 374.7,97.4 375.9,94.9 377.0,98.2 378.2,95.2 379.3,97.0 380.5,96.6 381.7,95.3 382.8,95.5 384.0,94.1 385.1,96.5 386.3,93.6 387.4,98.0 388.6,95.4 389.7,95.1 390.9,93.4 392.0,94.4 393.2,98.3 394.3,99.4 395.5,95.5 396.6,98.9 397.8,93.2 398.9,97.4 400.1,95.4 401.3,92.4 402.4,93.4 403.6,91.3 404.7,92.5 405.9,95.7 407.0,94.4 408.2,94.3 409.3,93.5 410.5,92.4 411.6,95.8 412.8,100.3 413.9,94.5 415.1,97.6 416.2,99.6 417.4,94.4 418.5,97.4 419.7,95.5 420.9,92.8 422.0,97.6 423.2,100.2 424.3,101.0 425.5,91.3 426.6,95.4 427.8,96.8 428.9,99.5 430.1,100.4 431.2,100.7 432.4,98.2 433.5,95.4 434.7,99.2 435.8,100.3 437.0,98.7 438.1,93.3 439.3,92.5 440.5,98.0 441.6,104.2 442.8,97.5 443.9,99.8 445.1,93.7 446.2,94.0 447.4,96.1 448.5,92.3 449.7,92.3 450.8,95.7 452.0,98.0 453.1,101.0 454.3,96.6 455.4,95.8 456.6,99.5 457.7,93.6 458.9,97.5 460.0,100.3 461.2,100.5 462.4,98.0 463.5,95.6 464.7,97.3 465.8,93.9 467.0,95.4 468.1,98.1 469.3,96.3 470.4,95.6 471.6,92.9 472.7,94.1 473.9,96.2 475.0,93.4 476.2,98.2 477.3,103.5 478.5,109.6 479.6,99.5 480.8,95.3 482.0,96.1 483.1,96.5 484.3,92.2 485.4,91.2 486.6,95.5 487.7,93.8 488.9,97.7 490.0,98.2 491.2,95.9 492.3,95.9 493.5,94.0 494.6,94.4 495.8,92.5 496.9,92.7 498.1,94.2 499.2,99.2 500.4,101.2 501.6,99.2 502.7,101.4 503.9,96.7 505.0,90.9 506.2,93.1 507.3,96.7 508.5,94.7 509.6,96.2 510.8,92.7 511.9,96.6 513.1,95.6 514.2,93.7 515.4,97.3 516.5,93.9 517.7,95.8 518.8,94.3 520.0,94.6 521.2,96.1 522.3,93.0 523.5,97.7 524.6,95.5 525.8,96.7 526.9,95.8 528.1,94.1 529.2,93.6 530.4,95.2 531.5,94.1 532.7,101.8 533.8,96.0 535.0,95.7 536.1,96.2 537.3,102.9 538.4,96.9 539.6,94.3" fill="none" stroke="#9cc8f4" stroke-width="2" stroke-linejoin="round" opacity=".45"/>
<polyline points="182.2,97.1 183.4,95.4 184.5,98.5 185.7,97.7 186.8,94.2 188.0,95.5 189.1,104.1 190.3,101.6 191.4,102.1 192.6,102.2 193.7,97.4 194.9,96.9 196.0,95.8 197.2,95.3 198.3,94.7 199.5,92.9 200.6,96.3 201.8,96.7 203.0,97.7 204.1,99.3 205.3,99.4 206.4,96.7 207.6,96.4 208.7,93.1 209.9,95.8 211.0,98.4 212.2,100.8 213.3,95.7 214.5,92.5 215.6,94.4 216.8,94.3 217.9,97.4 219.1,99.2 220.2,99.1 221.4,106.7 222.6,103.3 223.7,102.0 224.9,104.5 226.0,105.2 227.2,95.6 228.3,95.6 229.5,95.6 230.6,96.2 231.8,93.8 232.9,98.8 234.1,96.2 235.2,95.0 236.4,97.6 237.5,92.0 238.7,99.4 239.8,97.2 241.0,94.8 242.2,96.0 243.3,96.1 244.5,102.0 245.6,99.1 246.8,92.2 247.9,83.8 249.1,86.3 250.2,95.9 251.4,95.0 252.5,93.5 253.7,94.1 254.8,95.2 256.0,96.1 257.1,96.4 258.3,96.8 259.4,96.2 260.6,95.2 261.8,94.5 262.9,92.3 264.1,91.8 265.2,96.2 266.4,96.3 267.5,96.9 268.7,96.8 269.8,96.5 271.0,100.4 272.1,91.5 273.3,95.7 274.4,97.3 275.6,95.6 276.7,95.8 277.9,98.5 279.0,92.1 280.2,95.7 281.3,96.7 282.5,106.3 283.7,102.8 284.8,96.6 286.0,98.7 287.1,103.2 288.3,92.1 289.4,95.7 290.6,96.0 291.7,94.7 292.9,92.0 294.0,98.0 295.2,96.6 296.3,97.6 297.5,96.0 298.6,100.5 299.8,97.1 300.9,98.9 302.1,99.3 303.3,95.7 304.4,95.6 305.6,95.1 306.7,95.6 307.9,97.6 309.0,98.1 310.2,99.0 311.3,90.4 312.5,94.1 313.6,93.3 314.8,96.6 315.9,96.1 317.1,94.5 318.2,97.6 319.4,97.8 320.5,94.9 321.7,97.3 322.9,94.5 324.0,97.4 325.2,103.2 326.3,98.1 327.5,92.4 328.6,95.1 329.8,96.6 330.9,99.8 332.1,101.7 333.2,99.6 334.4,97.4 335.5,94.7 336.7,100.0 337.8,99.2 339.0,99.6 340.1,99.4 341.3,100.4 342.5,96.7 343.6,98.2 344.8,102.0 345.9,103.9 347.1,100.9 348.2,95.8 349.4,94.4 350.5,92.4 351.7,93.6 352.8,88.4 354.0,88.0 355.1,81.4 356.3,83.7 357.4,82.6 358.6,82.4 359.7,82.5 360.9,81.7 362.1,82.8 363.2,82.5 364.4,82.4 365.5,83.0 366.7,91.3 367.8,87.8 369.0,95.4 370.1,97.2 371.3,97.6 372.4,96.4 373.6,96.1 374.7,97.4 375.9,94.9 377.0,98.2 378.2,95.2 379.3,97.0 380.5,96.6 381.7,95.3 382.8,95.5 384.0,94.1 385.1,96.5 386.3,93.6 387.4,98.0 388.6,95.4 389.7,95.1 390.9,93.4 392.0,94.4 393.2,98.3 394.3,99.4 395.5,95.5 396.6,98.9 397.8,93.2 398.9,97.4 400.1,95.4 401.3,92.4 402.4,93.4 403.6,91.3 404.7,92.5 405.9,95.7 407.0,94.4 408.2,94.3 409.3,93.5 410.5,92.4 411.6,95.8 412.8,100.3 413.9,94.5 415.1,97.6 416.2,99.6 417.4,94.4 418.5,97.4 419.7,95.5 420.9,92.8 422.0,97.6 423.2,100.2 424.3,101.0 425.5,91.3 426.6,95.4 427.8,96.8 428.9,99.5 430.1,100.4 431.2,100.7 432.4,98.2 433.5,95.4 434.7,99.2 435.8,100.3 437.0,98.7 438.1,93.3 439.3,92.5 440.5,98.0 441.6,104.2 442.8,97.5 443.9,99.8 445.1,93.7 446.2,94.0 447.4,96.1 448.5,92.3 449.7,92.3 450.8,95.7 452.0,98.0 453.1,101.0 454.3,96.6 455.4,95.8 456.6,99.5 457.7,93.6 458.9,97.5 460.0,100.3 461.2,100.5 462.4,98.0 463.5,95.6 464.7,97.3 465.8,93.9 467.0,95.4 468.1,98.1 469.3,96.3 470.4,95.6 471.6,92.9 472.7,94.1 473.9,96.2 475.0,93.4 476.2,98.2 477.3,103.5 478.5,109.6 479.6,99.5 480.8,95.3 482.0,96.1 483.1,96.5 484.3,92.2 485.4,91.2 486.6,95.5 487.7,93.8 488.9,97.7 490.0,98.2 491.2,95.9 492.3,95.9 493.5,94.0 494.6,94.4 495.8,92.5 496.9,92.7 498.1,94.2 499.2,99.2 500.4,101.2 501.6,99.2 502.7,101.4 503.9,96.7 505.0,90.9 506.2,93.1 507.3,96.7 508.5,94.7 509.6,96.2 510.8,92.7 511.9,96.6 513.1,95.6 514.2,93.7 515.4,97.3 516.5,93.9 517.7,95.8 518.8,94.3 520.0,94.6 521.2,96.1 522.3,93.0 523.5,97.7 524.6,95.5 525.8,96.7 526.9,95.8 528.1,94.1 529.2,93.6 530.4,95.2 531.5,94.1 532.7,101.8 533.8,96.0 535.0,95.7 536.1,96.2 537.3,102.9 538.4,96.9 539.6,94.3" fill="none" stroke="#f4f9ff" stroke-width="1.15" stroke-linejoin="round"/>
<path d="M182.2 58.0V141.4H539.6" fill="none" stroke="#e0e0e0" stroke-width=".9"/>
<text x="179" y="60.5" font-size="6.9" fill="#fff" stroke="#fff" stroke-width=".15" text-anchor="end" font-family="Liberation Sans, sans-serif">0</text>
<text x="179" y="66.9" font-size="6.9" fill="#fff" stroke="#fff" stroke-width=".15" text-anchor="end" font-family="Liberation Sans, sans-serif">-10</text>
<text x="179" y="73.3" font-size="6.9" fill="#fff" stroke="#fff" stroke-width=".15" text-anchor="end" font-family="Liberation Sans, sans-serif">-20</text>
<text x="179" y="79.7" font-size="6.9" fill="#fff" stroke="#fff" stroke-width=".15" text-anchor="end" font-family="Liberation Sans, sans-serif">-30</text>
<text x="179" y="86.2" font-size="6.9" fill="#fff" stroke="#fff" stroke-width=".15" text-anchor="end" font-family="Liberation Sans, sans-serif">-40</text>
<text x="179" y="92.6" font-size="6.9" fill="#fff" stroke="#fff" stroke-width=".15" text-anchor="end" font-family="Liberation Sans, sans-serif">-50</text>
<text x="179" y="99.0" font-size="6.9" fill="#fff" stroke="#fff" stroke-width=".15" text-anchor="end" font-family="Liberation Sans, sans-serif">-60</text>
<text x="179" y="105.4" font-size="6.9" fill="#fff" stroke="#fff" stroke-width=".15" text-anchor="end" font-family="Liberation Sans, sans-serif">-70</text>
<text x="179" y="111.8" font-size="6.9" fill="#fff" stroke="#fff" stroke-width=".15" text-anchor="end" font-family="Liberation Sans, sans-serif">-80</text>
<text x="179" y="118.2" font-size="6.9" fill="#fff" stroke="#fff" stroke-width=".15" text-anchor="end" font-family="Liberation Sans, sans-serif">-90</text>
<text x="179" y="124.7" font-size="6.9" fill="#fff" stroke="#fff" stroke-width=".15" text-anchor="end" font-family="Liberation Sans, sans-serif">-100</text>
<text x="179" y="131.1" font-size="6.9" fill="#fff" stroke="#fff" stroke-width=".15" text-anchor="end" font-family="Liberation Sans, sans-serif">-110</text>
<text x="179" y="137.5" font-size="6.9" fill="#fff" stroke="#fff" stroke-width=".15" text-anchor="end" font-family="Liberation Sans, sans-serif">-120</text>
<text x="179" y="143.9" font-size="6.9" fill="#fff" stroke="#fff" stroke-width=".15" text-anchor="end" font-family="Liberation Sans, sans-serif">-130</text>
<text x="239.3" y="152.9" font-size="6.4" fill="#fff" stroke="#fff" stroke-width=".1" text-anchor="middle" font-family="Liberation Sans, sans-serif">3'848kHz</text>
<text x="297.9" y="152.9" font-size="6.4" fill="#fff" stroke="#fff" stroke-width=".1" text-anchor="middle" font-family="Liberation Sans, sans-serif">3'900kHz</text>
<text x="356.6" y="152.9" font-size="6.4" fill="#fff" stroke="#fff" stroke-width=".1" text-anchor="middle" font-family="Liberation Sans, sans-serif">3'952kHz</text>
<text x="415.2" y="152.9" font-size="6.4" fill="#fff" stroke="#fff" stroke-width=".1" text-anchor="middle" font-family="Liberation Sans, sans-serif">4'004kHz</text>
<text x="473.9" y="152.9" font-size="6.4" fill="#fff" stroke="#fff" stroke-width=".1" text-anchor="middle" font-family="Liberation Sans, sans-serif">4'056kHz</text>
<text x="532.5" y="152.9" font-size="6.4" fill="#fff" stroke="#fff" stroke-width=".1" text-anchor="middle" font-family="Liberation Sans, sans-serif">4'108kHz</text>
<rect x="353.6" y="39" width="14" height="102.4" fill="#bcbcbc" opacity=".46"/>
<rect x="352.7" y="39" width="1.2" height="102.4" fill="#e62020"/>
</svg>
<svg class="a" style="left:163px;top:162px" width="396" height="256" viewBox="163 162 396 256">
<defs>
<filter id="nz" x="0" y="0" width="100%" height="100%" color-interpolation-filters="sRGB">
<feTurbulence type="fractalNoise" baseFrequency="0.47 0.53" numOctaves="2" seed="11" result="t1"/>
<feColorMatrix in="t1" type="matrix" values="1 0 0 0 0  1 0 0 0 0  1 0 0 0 0  0 0 0 0 1" result="a"/>
<feTurbulence type="fractalNoise" baseFrequency="0.035 0.05" numOctaves="2" seed="4" result="t2"/>
<feColorMatrix in="t2" type="matrix" values="1 0 0 0 0  1 0 0 0 0  1 0 0 0 0  0 0 0 0 1" result="b"/>
<feComposite in="a" in2="b" operator="arithmetic" k1="0" k2="1" k3="0.3" k4="-0.15" result="n"/>
<feColorMatrix in="n" type="matrix" values="0.15 0 0 0 0.905  1.1 0 0 0 0.085  0 0 0.3 0 -0.05  0 0 0 0 1" result="c"/>
<feBlend in="c" in2="SourceGraphic" mode="multiply"/>
</filter>
<linearGradient id="cb" x1="0" y1="0" x2="0" y2="1">
<stop offset="0" stop-color="#380000"/><stop offset=".1" stop-color="#680000"/><stop offset=".26" stop-color="#c40c0c"/><stop offset=".35" stop-color="#f01a10"/><stop offset=".44" stop-color="#ff8a10"/><stop offset=".495" stop-color="#ffe818"/><stop offset=".535" stop-color="#d0dc78"/><stop offset=".578" stop-color="#58b0e8"/><stop offset=".615" stop-color="#2060e8"/><stop offset=".69" stop-color="#0a1e98"/><stop offset=".8" stop-color="#080c70"/><stop offset=".9" stop-color="#050544"/><stop offset="1" stop-color="#020224"/>
</linearGradient>
</defs>
<rect x="163.2" y="162.4" width="395.1" height="254.8" fill="#000"/>
<g filter="url(#nz)">
<rect x="182" y="162.7" width="356.79999999999995" height="253.9" fill="#fff"/>
<rect x="354.0" y="162.7" width="13.4" height="253.9" fill="#f0202c" opacity="1"/>
<rect x="353.4" y="162.7" width="14.6" height="253.9" fill="#f41838" opacity="0.5"/>
<rect x="246.7" y="162.7" width="3.1" height="253.9" fill="#f2202c" opacity="1"/>
<rect x="246.1" y="162.7" width="4.3" height="253.9" fill="#f41838" opacity="0.3"/>
<rect x="208.2" y="162.7" width="2.4" height="253.9" fill="#f41838" opacity="0.5"/>
<rect x="190.2" y="162.7" width="1.6" height="253.9" fill="#f41838" opacity="0.3"/>
<rect x="258.4" y="162.7" width="1.6" height="253.9" fill="#f41838" opacity="0.25"/>
<rect x="393.0" y="162.7" width="2.2" height="253.9" fill="#f41838" opacity="0.5"/>
<rect x="404.2" y="190" width="1.6" height="226.6" fill="#f41838" opacity="0.2"/>
<rect x="436.6" y="162.7" width="2.2" height="253.9" fill="#f41838" opacity="0.3"/>
<rect x="436.6" y="235" width="2.2" height="65.0" fill="#f41838" opacity="0.35"/>
<rect x="460.0" y="162.7" width="2.8" height="253.9" fill="#f41838" opacity="0.62"/>
<rect x="474.6" y="162.7" width="2.8" height="253.9" fill="#f41838" opacity="0.62"/>
<rect x="494.4" y="162.7" width="2.4" height="48.3" fill="#f41838" opacity="0.5"/>
<path d="M495.6 210.5Q495.8 216 499.5 217" stroke="#f41838" stroke-width="2.2" fill="none" opacity=".45"/>
</g>
<rect x="544.7" y="171.7" width="7.4" height="240.5" fill="url(#cb)"/>
</svg>
<div class="t" style="left:566px;top:40.4px">Zoom</div>
<svg class="a" style="left:560px;top:51.3px" width="30" height="109.2" viewBox="560 51.3 30 109.2">
<path d="M574.4 53.3V158.5" stroke="#5c5c5c" stroke-width="1.4"/><path d="M575.6 53.3V158.5" stroke="#fbfbfb" stroke-width=".9"/>
<rect x="565.5" y="56.85" width="2" height="1.1" fill="#2a2a2a"/><rect x="582.5" y="56.85" width="2" height="1.1" fill="#2a2a2a"/>
<rect x="565.5" y="66.75" width="2" height="1.1" fill="#2a2a2a"/><rect x="582.5" y="66.75" width="2" height="1.1" fill="#2a2a2a"/>
<rect x="565.5" y="76.65" width="2" height="1.1" fill="#2a2a2a"/><rect x="582.5" y="76.65" width="2" height="1.1" fill="#2a2a2a"/>
<rect x="565.5" y="86.55" width="2" height="1.1" fill="#2a2a2a"/><rect x="582.5" y="86.55" width="2" height="1.1" fill="#2a2a2a"/>
<rect x="565.5" y="96.45" width="2" height="1.1" fill="#2a2a2a"/><rect x="582.5" y="96.45" width="2" height="1.1" fill="#2a2a2a"/>
<rect x="565.5" y="106.35" width="2" height="1.1" fill="#2a2a2a"/><rect x="582.5" y="106.35" width="2" height="1.1" fill="#2a2a2a"/>
<rect x="565.5" y="116.25" width="2" height="1.1" fill="#2a2a2a"/><rect x="582.5" y="116.25" width="2" height="1.1" fill="#2a2a2a"/>
<rect x="565.5" y="126.15" width="2" height="1.1" fill="#2a2a2a"/><rect x="582.5" y="126.15" width="2" height="1.1" fill="#2a2a2a"/>
<rect x="565.5" y="136.05" width="2" height="1.1" fill="#2a2a2a"/><rect x="582.5" y="136.05" width="2" height="1.1" fill="#2a2a2a"/>
<rect x="565.5" y="145.95" width="2" height="1.1" fill="#2a2a2a"/><rect x="582.5" y="145.95" width="2" height="1.1" fill="#2a2a2a"/>
<rect x="565.5" y="155.85" width="2" height="1.1" fill="#2a2a2a"/><rect x="582.5" y="155.85" width="2" height="1.1" fill="#2a2a2a"/>
<rect x="567.8" y="131.2" width="14.4" height="6.9" fill="#d6d2ca"/><path d="M568.2 137.70V131.60H581.8" stroke="#fff" stroke-width=".9" fill="none"/><path d="M567.8 137.80H581.9V131.20" stroke="#404040" stroke-width=".9" fill="none"/><path d="M568.8 137.00H581V132.20" stroke="#8a8a8a" stroke-width=".7" fill="none"/>
</svg>
<div class="t" style="left:562.8px;top:168.8px">Contrast</div>
<svg class="a" style="left:560px;top:180.4px" width="30" height="109.4" viewBox="560 180.4 30 109.4">
<path d="M574.4 182.4V287.8" stroke="#5c5c5c" stroke-width="1.4"/><path d="M575.6 182.4V287.8" stroke="#fbfbfb" stroke-width=".9"/>
<rect x="565.5" y="185.65" width="2" height="1.1" fill="#2a2a2a"/><rect x="582.5" y="185.65" width="2" height="1.1" fill="#2a2a2a"/>
<rect x="565.5" y="198.00" width="2" height="1.1" fill="#2a2a2a"/><rect x="582.5" y="198.00" width="2" height="1.1" fill="#2a2a2a"/>
<rect x="565.5" y="210.35" width="2" height="1.1" fill="#2a2a2a"/><rect x="582.5" y="210.35" width="2" height="1.1" fill="#2a2a2a"/>
<rect x="565.5" y="222.70" width="2" height="1.1" fill="#2a2a2a"/><rect x="582.5" y="222.70" width="2" height="1.1" fill="#2a2a2a"/>
<rect x="565.5" y="235.05" width="2" height="1.1" fill="#2a2a2a"/><rect x="582.5" y="235.05" width="2" height="1.1" fill="#2a2a2a"/>
<rect x="565.5" y="247.40" width="2" height="1.1" fill="#2a2a2a"/><rect x="582.5" y="247.40" width="2" height="1.1" fill="#2a2a2a"/>
<rect x="565.5" y="259.75" width="2" height="1.1" fill="#2a2a2a"/><rect x="582.5" y="259.75" width="2" height="1.1" fill="#2a2a2a"/>
<rect x="565.5" y="272.10" width="2" height="1.1" fill="#2a2a2a"/><rect x="582.5" y="272.10" width="2" height="1.1" fill="#2a2a2a"/>
<rect x="565.5" y="284.45" width="2" height="1.1" fill="#2a2a2a"/><rect x="582.5" y="284.45" width="2" height="1.1" fill="#2a2a2a"/>
<rect x="567.8" y="232.4" width="14.4" height="6.9" fill="#d6d2ca"/><path d="M568.2 238.90V232.80H581.8" stroke="#fff" stroke-width=".9" fill="none"/><path d="M567.8 239.00H581.9V232.40" stroke="#404040" stroke-width=".9" fill="none"/><path d="M568.8 238.20H581V233.40" stroke="#8a8a8a" stroke-width=".7" fill="none"/>
</svg>
<div class="t" style="left:566.2px;top:296.3px">Speed</div>
<svg class="a" style="left:560px;top:308.0px" width="30" height="109.2" viewBox="560 308.0 30 109.2">
<path d="M574.4 310V415.2" stroke="#5c5c5c" stroke-width="1.4"/><path d="M575.6 310V415.2" stroke="#fbfbfb" stroke-width=".9"/>
<rect x="565.5" y="313.65" width="2" height="1.1" fill="#2a2a2a"/><rect x="582.5" y="313.65" width="2" height="1.1" fill="#2a2a2a"/>
<rect x="565.5" y="323.55" width="2" height="1.1" fill="#2a2a2a"/><rect x="582.5" y="323.55" width="2" height="1.1" fill="#2a2a2a"/>
<rect x="565.5" y="333.45" width="2" height="1.1" fill="#2a2a2a"/><rect x="582.5" y="333.45" width="2" height="1.1" fill="#2a2a2a"/>
<rect x="565.5" y="343.35" width="2" height="1.1" fill="#2a2a2a"/><rect x="582.5" y="343.35" width="2" height="1.1" fill="#2a2a2a"/>
<rect x="565.5" y="353.25" width="2" height="1.1" fill="#2a2a2a"/><rect x="582.5" y="353.25" width="2" height="1.1" fill="#2a2a2a"/>
<rect x="565.5" y="363.15" width="2" height="1.1" fill="#2a2a2a"/><rect x="582.5" y="363.15" width="2" height="1.1" fill="#2a2a2a"/>
<rect x="565.5" y="373.05" width="2" height="1.1" fill="#2a2a2a"/><rect x="582.5" y="373.05" width="2" height="1.1" fill="#2a2a2a"/>
<rect x="565.5" y="382.95" width="2" height="1.1" fill="#2a2a2a"/><rect x="582.5" y="382.95" width="2" height="1.1" fill="#2a2a2a"/>
<rect x="565.5" y="392.85" width="2" height="1.1" fill="#2a2a2a"/><rect x="582.5" y="392.85" width="2" height="1.1" fill="#2a2a2a"/>
<rect x="565.5" y="402.75" width="2" height="1.1" fill="#2a2a2a"/><rect x="582.5" y="402.75" width="2" height="1.1" fill="#2a2a2a"/>
<rect x="565.5" y="412.65" width="2" height="1.1" fill="#2a2a2a"/><rect x="582.5" y="412.65" width="2" height="1.1" fill="#2a2a2a"/>
<rect x="567.8" y="370.2" width="14.4" height="6.9" fill="#d6d2ca"/><path d="M568.2 376.70V370.60H581.8" stroke="#fff" stroke-width=".9" fill="none"/><path d="M567.8 376.80H581.9V370.20" stroke="#404040" stroke-width=".9" fill="none"/><path d="M568.8 376.00H581V371.20" stroke="#8a8a8a" stroke-width=".7" fill="none"/>
</svg>
</body></html>
